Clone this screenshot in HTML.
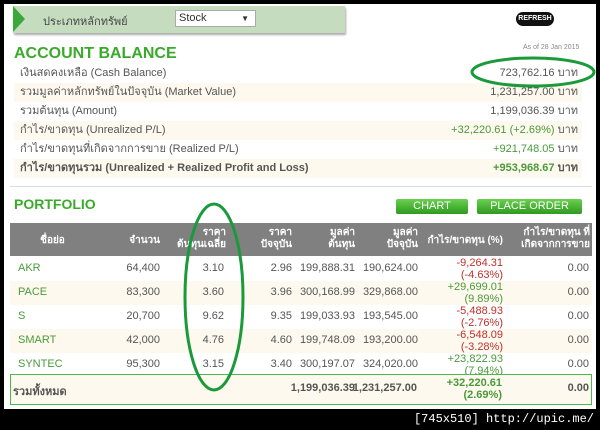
<!DOCTYPE html><html><head><meta charset="utf-8"><style>
body{margin:0;width:600px;height:430px;background:#000;position:relative;overflow:hidden;font-family:Tahoma,"Liberation Sans","Noto Sans CJK SC",sans-serif;font-size:11px;color:#555}
.w{position:absolute;left:4px;top:4px;width:592px;height:405px;background:#fff}
.a{position:absolute;white-space:nowrap}
.r{position:absolute;left:14px;width:568px;height:19px;line-height:19px}
.c{background:#fdf9ee}
.g{color:#4a9a3a}.red{color:#c0302a}
.bt{position:absolute;height:15px;background:linear-gradient(#6ad050,#2e9a1e);color:#fff;font-size:11px;text-align:center;line-height:15px;border-radius:2px}
.th{position:absolute;top:223px;left:10px;width:582px;height:33px;background:#808080;color:#fff;font-weight:bold;font-size:10px}
.tr{position:absolute;left:10px;width:582px;height:24px}
.tr span,.th span{position:absolute;text-align:right;white-space:nowrap}
</style></head><body><div class="w"></div>
<div class="a" style="left:13px;top:6px;width:332px;height:27px;background:#c5dcbf;box-shadow:1px 2px 2px #aaa"></div>
<div class="a" style="left:13px;top:6px;width:0;height:0;border-top:13px solid transparent;border-bottom:13px solid transparent;border-left:12px solid #3aa83a"></div>
<div class="a" style="left:43px;top:12px;color:#444">ประเภทหลักทรัพย์</div>
<div class="a" style="left:175px;top:10px;width:76px;height:15px;background:#fff;border:1px solid #aaa;line-height:15px;padding-left:3px;color:#333">Stock<span style="position:absolute;right:6px;font-size:8px">▼</span></div>
<div class="a" style="left:516px;top:12px;width:38px;height:14px;background:#111;border-radius:7px;color:#fff;font-size:7px;font-weight:bold;text-align:center;line-height:14px">REFRESH</div>
<div class="a" style="left:14px;top:45px;font-size:16px;font-weight:bold;color:#3aaa2a">ACCOUNT BALANCE</div>
<div class="a" style="left:523px;top:44px;font-size:7px;color:#888">As of 28 Jan 2015</div>
<div class="r" style="top:64px"><span style="margin-left:6px">เงินสดคงเหลือ (Cash Balance)</span><span style="position:absolute;right:4px">723,762.16 บาท</span></div>
<div class="r c" style="top:83px"><span style="margin-left:6px">รวมมูลค่าหลักทรัพย์ในปัจจุบัน (Market Value)</span><span style="position:absolute;right:4px">1,231,257.00 บาท</span></div>
<div class="r" style="top:102px"><span style="margin-left:6px">รวมต้นทุน (Amount)</span><span style="position:absolute;right:4px">1,199,036.39 บาท</span></div>
<div class="r c" style="top:121px"><span style="margin-left:6px">กำไร/ขาดทุน (Unrealized P/L)</span><span style="position:absolute;right:4px"><span class="g">+32,220.61 (+2.69%)</span> บาท</span></div>
<div class="r" style="top:140px"><span style="margin-left:6px">กำไร/ขาดทุนที่เกิดจากการขาย (Realized P/L)</span><span style="position:absolute;right:4px"><span class="g">+921,748.05</span> บาท</span></div>
<div class="r c" style="top:159px;font-weight:bold"><span style="margin-left:6px">กำไร/ขาดทุนรวม (Unrealized + Realized Profit and Loss)</span><span style="position:absolute;right:4px"><span class="g">+953,968.67</span> บาท</span></div>
<div class="a" style="left:10px;top:186px;width:582px;height:1px;background:#ddd"></div>
<div class="a" style="left:14px;top:196px;font-size:14px;font-weight:bold;color:#3aaa2a">PORTFOLIO</div>
<div class="bt" style="left:396px;top:199px;width:72px">CHART</div>
<div class="bt" style="left:477px;top:199px;width:105px">PLACE ORDER</div>
<div class="th"><span style="left:20px;width:45px;top:10px;text-align:center">ชื่อย่อ</span><span style="right:432px;top:10px">จำนวน</span><span style="right:366px;top:4px;line-height:12px">ราคา<br>ต้นทุนเฉลี่ย</span><span style="right:300px;top:4px;line-height:12px">ราคา<br>ปัจจุบัน</span><span style="right:237px;top:4px;line-height:12px">มูลค่า<br>ต้นทุน</span><span style="right:174px;top:4px;line-height:12px">มูลค่า<br>ปัจจุบัน</span><span style="right:89px;top:10px">กำไร/ขาดทุน (%)</span><span style="right:2px;top:4px;line-height:12px">กำไร/ขาดทุน ที่<br>เกิดจากการขาย</span></div>
<div class="tr" style="top:257px"><span style="left:8px;top:5px;color:#4a9a3a">AKR</span><span style="right:432px;top:5px">64,400</span><span style="right:368px;top:5px">3.10</span><span style="right:300px;top:5px">2.96</span><span style="right:237px;top:5px">199,888.31</span><span style="right:174px;top:5px">190,624.00</span><span class="red" style="right:89px;top:0px;line-height:12px">-9,264.31<br>(-4.63%)</span><span style="right:3px;top:5px">0.00</span></div>
<div class="tr c" style="top:281px"><span style="left:8px;top:5px;color:#4a9a3a">PACE</span><span style="right:432px;top:5px">83,300</span><span style="right:368px;top:5px">3.60</span><span style="right:300px;top:5px">3.96</span><span style="right:237px;top:5px">300,168.99</span><span style="right:174px;top:5px">329,868.00</span><span class="g" style="right:89px;top:0px;line-height:12px">+29,699.01<br>(9.89%)</span><span style="right:3px;top:5px">0.00</span></div>
<div class="tr" style="top:305px"><span style="left:8px;top:5px;color:#4a9a3a">S</span><span style="right:432px;top:5px">20,700</span><span style="right:368px;top:5px">9.62</span><span style="right:300px;top:5px">9.35</span><span style="right:237px;top:5px">199,033.93</span><span style="right:174px;top:5px">193,545.00</span><span class="red" style="right:89px;top:0px;line-height:12px">-5,488.93<br>(-2.76%)</span><span style="right:3px;top:5px">0.00</span></div>
<div class="tr c" style="top:329px"><span style="left:8px;top:5px;color:#4a9a3a">SMART</span><span style="right:432px;top:5px">42,000</span><span style="right:368px;top:5px">4.76</span><span style="right:300px;top:5px">4.60</span><span style="right:237px;top:5px">199,748.09</span><span style="right:174px;top:5px">193,200.00</span><span class="red" style="right:89px;top:0px;line-height:12px">-6,548.09<br>(-3.28%)</span><span style="right:3px;top:5px">0.00</span></div>
<div class="tr" style="top:353px"><span style="left:8px;top:5px;color:#4a9a3a">SYNTEC</span><span style="right:432px;top:5px">95,300</span><span style="right:368px;top:5px">3.15</span><span style="right:300px;top:5px">3.40</span><span style="right:237px;top:5px">300,197.07</span><span style="right:174px;top:5px">324,020.00</span><span class="g" style="right:89px;top:0px;line-height:12px">+23,822.93<br>(7.94%)</span><span style="right:3px;top:5px">0.00</span></div>
<div class="tr c" style="top:374px;height:29px;border:1px solid #4cb84c;width:580px;font-weight:bold"><span style="left:2px;top:7px">รวมทั้งหมด</span><span style="right:236px;top:7px">1,199,036.39</span><span style="right:174px;top:7px">1,231,257.00</span><span class="g" style="right:89px;top:2px;line-height:12px">+32,220.61<br>(2.69%)</span><span style="right:2px;top:7px">0.00</span></div>
<svg class="a" style="left:0;top:0" width="600" height="430"><ellipse cx="533" cy="72" rx="61" ry="14" fill="none" stroke="#1a9a3a" stroke-width="3"/><ellipse cx="214" cy="297" rx="29" ry="93" fill="none" stroke="#1a9a3a" stroke-width="3"/></svg>
<div class="a" style="right:6px;top:412px;color:#fff;font-family:'Liberation Mono',monospace;font-size:12px">[745x510] http://upic.me/</div>
</body></html>
